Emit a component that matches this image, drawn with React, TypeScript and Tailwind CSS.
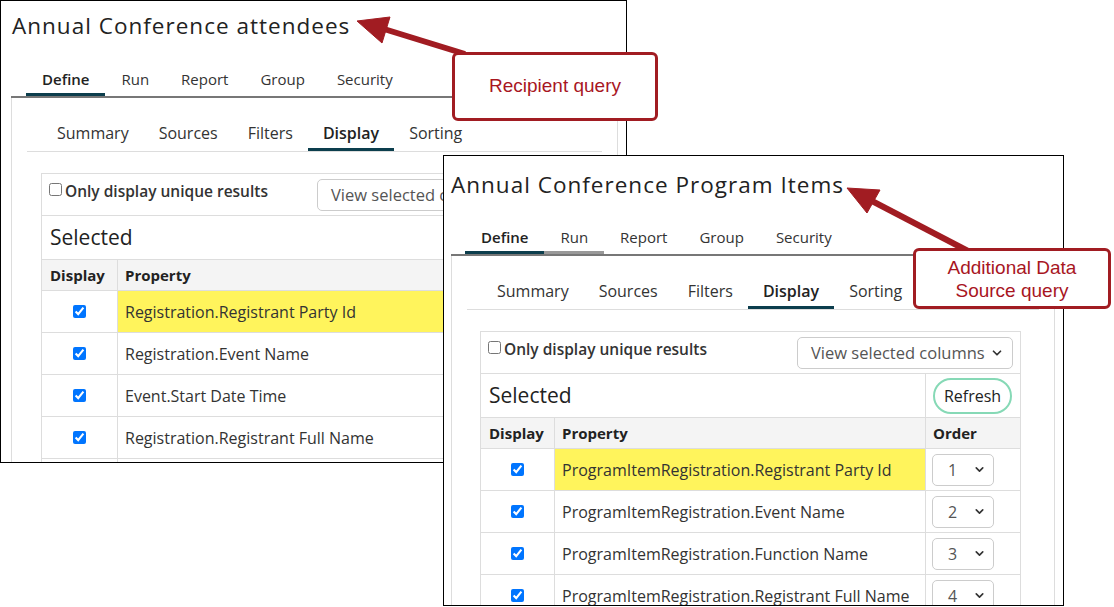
import { ChevronDown } from "lucide-react";

type WindowProps = {
  title: string;
  rows: string[];
  className: string;
  titlePad: string;
  tabsGap: string;
  tabsPad: string;
  inset: string;
  cardLeft: string;
  cardWidth: string;
  cols: string;
  hoverRun?: boolean;
};

const mainTabs = ["Define", "Run", "Report", "Group", "Security"];
const subTabs = ["Summary", "Sources", "Filters", "Display", "Sorting"];

const attendeeRows = [
  "Registration.Registrant Party Id",
  "Registration.Event Name",
  "Event.Start Date Time",
  "Registration.Registrant Full Name",
  "",
];

const programRows = [
  "ProgramItemRegistration.Registrant Party Id",
  "ProgramItemRegistration.Event Name",
  "ProgramItemRegistration.Function Name",
  "ProgramItemRegistration.Registrant Full Name",
];

function QueryWindow({
  title,
  rows,
  className,
  titlePad,
  tabsGap,
  tabsPad,
  inset,
  cardLeft,
  cardWidth,
  cols,
  hoverRun,
}: WindowProps) {
  return (
    <div className={`absolute bg-white border border-black overflow-hidden text-[#333] ${className}`}>
      <h1 className={`${titlePad} text-[22.5px] leading-[28px] tracking-[0.045em] text-[#222] whitespace-nowrap`}>
        {title}
      </h1>

      {/* Top tabs */}
      <div className={`${tabsGap} ${inset} ${tabsPad} flex border-b-2 border-[#777]`}>
        {mainTabs.map((tab, i) => (
          <div
            key={tab}
            className={`px-[16px] pb-[4px] text-[15px] leading-[20px] border-b-[3px] ${
              i === 0
                ? "border-[#0c3e4d] font-semibold text-[#222]"
                : i === 1 && hoverRun
                ? "border-[#999]"
                : "border-transparent"
            }`}
          >
            {tab}
          </div>
        ))}
      </div>

      {/* Tab panel */}
      <div className={`${inset} mr-[8px] h-full border-x border-[#ddd] pt-[25px]`}>
        <div className="mx-[15px] flex border-b border-[#ddd] pl-[15px]">
          {subTabs.map((tab) => (
            <div
              key={tab}
              className={`px-[15px] pb-[5px] text-[16px] leading-[20px] border-b-[3px] ${
                tab === "Display" ? "border-[#0c3e4d] font-semibold text-[#222]" : "border-transparent"
              }`}
            >
              {tab}
            </div>
          ))}
        </div>

        <div className={`mt-[21px] ${cardLeft} ${cardWidth} border border-[#ddd]`}>
          <div className="h-[42px] flex justify-between border-b border-[#ddd]">
            <label className="flex items-start gap-[3px] pl-[7px] pt-[7px] text-[15.5px] leading-[20px] font-semibold text-[#333]">
              <input type="checkbox" className="m-0 mt-[2px] w-[13px] h-[13px]" />
              Only display unique results
            </label>
            <div className="mt-[5px] mr-[7px] h-[32px] w-[216px] rounded-[5px] border border-[#ccc] flex items-center justify-between pl-[13px] pr-[8px] text-[16.5px] text-[#555]">
              <span className="whitespace-nowrap">View selected columns</span>
              <ChevronDown size={14} strokeWidth={3} className="text-[#333] shrink-0" />
            </div>
          </div>

          <div className={`grid ${cols}`}>
            <div className="col-span-2 h-[44px] flex items-center px-[8px] text-[21px] text-[#222] border-b border-[#ddd]">
              Selected
            </div>
            <div className="h-[44px] flex items-center pl-[7px] border-b border-l border-[#ddd]">
              <div className="h-[36px] w-[79px] rounded-full border-2 border-[#86d9b6] flex items-center justify-center text-[16px] text-[#222]">
                Refresh
              </div>
            </div>

            <div className="h-[31px] flex items-center px-[8px] bg-[#f4f4f4] border-b border-[#ddd] font-bold text-[15px] text-[#222]">
              Display
            </div>
            <div className="h-[31px] flex items-center px-[7px] bg-[#f4f4f4] border-b border-l border-[#ddd] font-bold text-[15px] text-[#222]">
              Property
            </div>
            <div className="h-[31px] flex items-center px-[7px] bg-[#f4f4f4] border-b border-l border-[#ddd] font-bold text-[15px] text-[#222]">
              Order
            </div>

            {rows.map((row, i) => (
              <Row key={i} label={row} order={i + 1} highlight={i === 0} />
            ))}
          </div>
        </div>
      </div>
    </div>
  );
}

function Row({ label, order, highlight }: { label: string; order: number; highlight: boolean }) {
  return (
    <>
      <div className="h-[42px] flex items-center justify-center border-b border-[#ddd]">
        {label && <input type="checkbox" defaultChecked className="m-0 w-[13px] h-[13px]" />}
      </div>
      <div
        className={`h-[42px] flex items-center px-[7px] border-b border-l border-[#ddd] text-[16px] text-[#333] whitespace-nowrap ${
          highlight ? "bg-[#fff45c]" : ""
        }`}
      >
        {label}
      </div>
      <div className="h-[42px] flex items-center pl-[6px] border-b border-l border-[#ddd]">
        {label && (
          <div className="h-[32px] w-[62px] rounded-[5px] border border-[#ccc] flex items-center justify-between pl-[15px] pr-[7px] text-[16px] text-[#555]">
            <span>{order}</span>
            <ChevronDown size={13} strokeWidth={3} className="text-[#333]" />
          </div>
        )}
      </div>
    </>
  );
}

function Arrows() {
  return (
    <svg className="absolute inset-0 pointer-events-none" width={1114} height={607} viewBox="0 0 1114 607">
      <g fill="#a11c22" stroke="#a11c22">
        <line x1={465} y1={54} x2={384} y2={29} strokeWidth={6} />
        <polygon points="357,21 390,17 382,43" strokeWidth={1} strokeLinejoin="round" />
        <line x1={968} y1={251} x2={872} y2={201} strokeWidth={6} />
        <polygon points="847,188 880,190 867,213" strokeWidth={1} strokeLinejoin="round" />
      </g>
    </svg>
  );
}

export default function App() {
  return (
    <div className="relative w-[1114px] h-[607px] bg-white overflow-hidden font-['Open_Sans',sans-serif]">
      <QueryWindow
        title="Annual Conference attendees"
        rows={attendeeRows}
        className="left-0 top-0 w-[627px] h-[463px]"
        titlePad="pl-[11px] pt-[11px]"
        tabsGap="mt-[29px]"
        tabsPad="pl-[15px]"
        inset="ml-[10px]"
        cardLeft="ml-[29px]"
        cardWidth="w-[500px]"
        cols="grid-cols-[75px_1fr_95px]"
      />
      <QueryWindow
        title="Annual Conference Program Items"
        rows={programRows}
        className="left-[443px] top-[155px] w-[621px] h-[451px]"
        titlePad="pl-[7px] pt-[15px]"
        tabsGap="mt-[28px]"
        tabsPad="pl-[14px]"
        inset="ml-[7px]"
        cardLeft="ml-[28px]"
        cardWidth="w-[541px]"
        cols="grid-cols-[73px_1fr_95px]"
        hoverRun
      />

      <Arrows />

      {/* Callouts */}
      <div className="absolute left-[452px] top-[52px] w-[206px] h-[69px] bg-white border-[3px] border-[#a11c22] rounded-[6px] flex items-center justify-center font-['Liberation_Sans',sans-serif] text-[19px] text-[#a8161f]">
        Recipient query
      </div>
      <div className="absolute left-[913px] top-[248px] w-[198px] h-[61px] bg-white border-[3px] border-[#a11c22] rounded-[6px] flex items-center justify-center text-center font-['Liberation_Sans',sans-serif] text-[19px] leading-[23px] text-[#a8161f]">
        Additional Data
        <br />
        Source query
      </div>
    </div>
  );
}
